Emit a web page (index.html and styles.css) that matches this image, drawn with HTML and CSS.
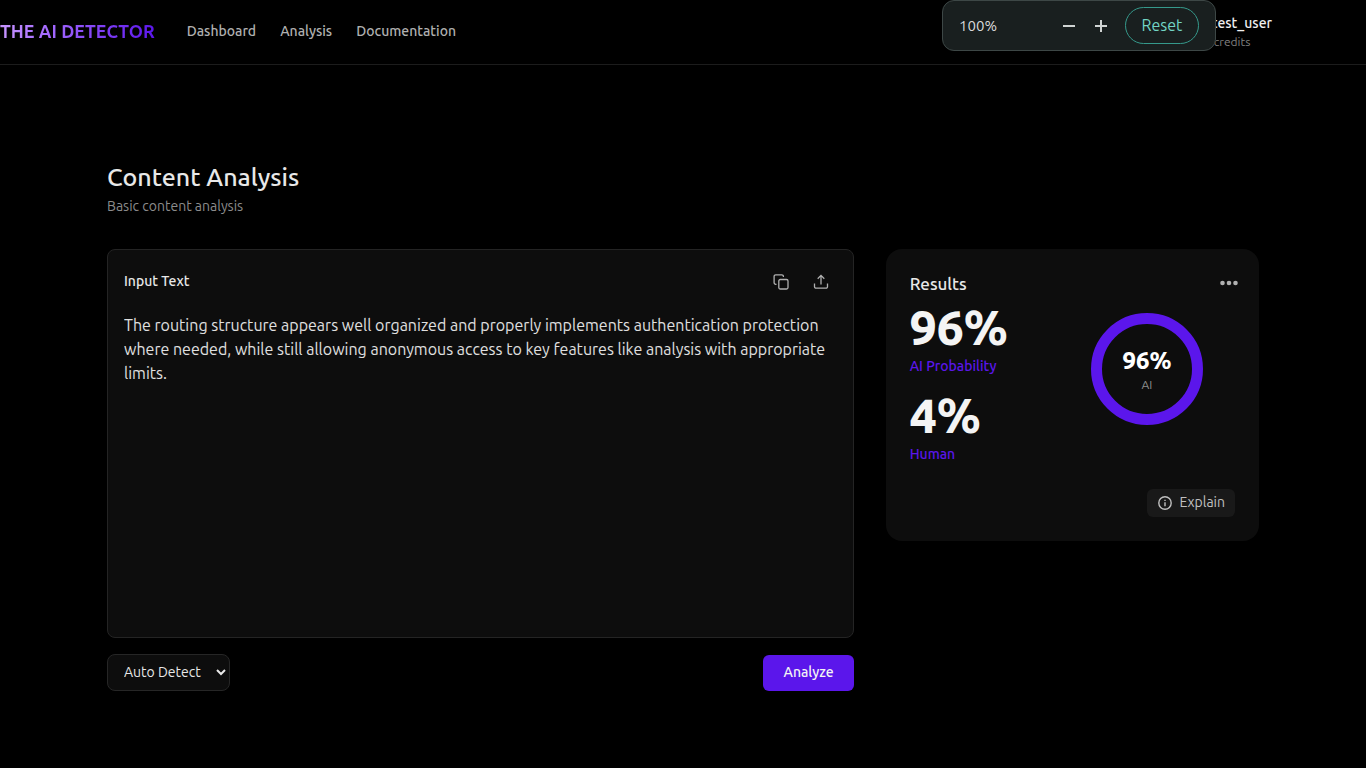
FILE: index.html
```html
<!DOCTYPE html>
<html lang="en">
<head>
<meta charset="utf-8">
<meta name="viewport" content="width=device-width, initial-scale=1">
<title>The AI Detector</title>
<link rel="stylesheet" href="styles.css">
</head>
<body>
<header class="site-header">
  <a class="brand" href="#">THE AI DETECTOR</a>
  <nav class="nav">
    <a href="#">Dashboard</a>
    <a href="#">Analysis</a>
    <a href="#">Documentation</a>
  </nav>
  <div class="user">
    <span class="user-name">test_user</span>
    <span class="user-credits">credits</span>
  </div>
</header>

<div class="zoom-bubble">
  <span class="zoom-value">100%</span>
  <button class="zoom-step" type="button" aria-label="Zoom out"><svg width="14" height="14" viewBox="0 0 14 14"><path d="M1 7h12"/></svg></button>
  <button class="zoom-step" type="button" aria-label="Zoom in"><svg width="14" height="14" viewBox="0 0 14 14"><path d="M1 7h12M7 1v12"/></svg></button>
  <button class="zoom-reset" type="button">Reset</button>
</div>

<main class="page">
  <h1 class="title">Content Analysis</h1>
  <p class="subtitle">Basic content analysis</p>

  <div class="columns">
    <section class="editor">
      <div class="input-card">
        <div class="input-head">
          <label class="input-label" for="content">Input Text</label>
          <div class="input-tools">
            <button class="icon-button" type="button" aria-label="Copy">
              <svg width="16" height="16" viewBox="0 0 16 16"><rect x="5.800" y="5.500" width="9.200" height="9.500" rx="1.500"/><path d="M3.500 10.300h-.8A1.600 1.600 0 0 1 1.100 8.700V2.400A1.600 1.600 0 0 1 2.700.8h6.100A1.600 1.600 0 0 1 10.400 2.400V3"/></svg>
            </button>
            <button class="icon-button" type="button" aria-label="Upload">
              <svg width="16" height="16" viewBox="0 0 16 16"><path d="M8 10.500V1.600M4.700 4.700 8 1.400l3.300 3.300M1.500 9.500v3.200a1.500 1.500 0 0 0 1.500 1.500h10a1.500 1.500 0 0 0 1.500-1.500V9.500"/></svg>
            </button>
          </div>
        </div>
        <textarea class="input-text" id="content" spellcheck="false">The routing structure appears well organized and properly implements authentication protection where needed, while still allowing anonymous access to key features like analysis with appropriate limits.</textarea>
      </div>
      <div class="actions">
        <select class="language" aria-label="Language"><option>Auto Detect</option></select>
        <button class="analyze" type="button">Analyze</button>
      </div>
    </section>

    <section class="results">
      <div class="results-head">
        <h2 class="results-title">Results</h2>
        <button class="more" type="button" aria-label="More options"><svg width="20" height="6" viewBox="0 0 20 6"><circle cx="3.500" cy="3" r="2.300"/><circle cx="10" cy="3" r="2.300"/><circle cx="16.500" cy="3" r="2.300"/></svg></button>
      </div>
      <div class="results-body">
        <div class="scores">
          <div class="score"><span class="score-value">96%</span><span class="score-label">AI Probability</span></div>
          <div class="score"><span class="score-value">4%</span><span class="score-label">Human</span></div>
        </div>
        <div class="gauge">
          <span class="gauge-value">96%</span>
          <span class="gauge-label">AI</span>
        </div>
      </div>
      <button class="explain" type="button">
        <svg width="14" height="14" viewBox="0 0 14 14"><circle cx="7" cy="7" r="6.200"/><path d="M7 6.300v3.900M7 3.800v1.200"/></svg>
        Explain
      </button>
    </section>
  </div>
</main>
</body>
</html>
```
FILE: styles.css
```css
* { box-sizing: border-box; }

body {
  margin: 0;
  background: #000;
  color: #e8e8e8;
  font-family: Ubuntu, "Noto Sans", sans-serif;
  font-size: 14px;
  line-height: 20px;
}

button, select, textarea { font: inherit; color: inherit; }
button { border: 0; background: none; padding: 0; cursor: pointer; }
a { color: inherit; text-decoration: none; }
svg { display: block; fill: none; stroke: currentColor; }

.site-header {
  display: flex;
  align-items: center;
  min-height: 65px;
  padding-right: 94px;
  border-bottom: 1px solid #1c1c1c;
}

.brand {
  padding-bottom: 2px;
  font-size: 18px;
  font-weight: 600;
  line-height: 24px;
  background: linear-gradient(90deg, #c896ff, #a56bff 30%, #5b16eb);
  -webkit-background-clip: text;
  background-clip: text;
  color: transparent;
}

.nav {
  display: flex;
  gap: 24px;
  margin-left: 32px;
  padding-bottom: 2px;
  color: #b0b0b0;
  font-weight: 500;
}

.user { display: flex; flex-direction: column; margin-left: auto; }
.user-name { color: #f0f0f0; font-weight: 500; }
.user-credits { padding-left: 2px; color: #808080; font-size: 12px; line-height: 18px; }

.zoom-bubble {
  position: absolute;
  top: 0;
  right: 150px;
  display: flex;
  align-items: center;
  width: 274px;
  height: 51px;
  padding: 0 16px;
  border: 1px solid #3d4746;
  border-radius: 12px;
  background: #191f1f;
}
.zoom-value { margin-right: auto; color: #d8dada; font-size: 15px; }
.zoom-step { padding: 9px; color: #d0d4d3; }
.zoom-step svg { stroke-width: 2; }
.zoom-reset {
  width: 74px;
  height: 37px;
  margin-left: 8px;
  padding-bottom: 2px;
  border: 1px solid #35998b;
  border-radius: 20px;
  color: #72d5c5;
  font-size: 16px;
}

.page { max-width: 1200px; margin: 0 auto; padding: 96px 24px 72px; }
.title { margin: 0; font-size: 25px; font-weight: 500; line-height: 32px; }
.subtitle { margin: 3px 0 33px; color: #8c8c8c; }

.columns { display: grid; grid-template-columns: 2fr 1fr; gap: 32px; align-items: start; }

.input-card {
  display: flex;
  flex-direction: column;
  min-height: 389px;
  padding: 16px;
  border: 1px solid #242424;
  border-radius: 8px;
  background: #0d0d0d;
}
.input-head { display: flex; justify-content: space-between; align-items: center; }
.input-label { padding-bottom: 2px; font-weight: 500; }
.input-tools { display: flex; gap: 8px; }
.icon-button { padding: 8px; color: #b0b0b0; }
.icon-button svg { stroke-width: 1.3; }
.input-text {
  flex: 1;
  width: 100%;
  margin-top: 15px;
  padding: 0;
  border: 0;
  outline: 0;
  resize: none;
  background: none;
  color: #e0e0e0;
  font-size: 16px;
  line-height: 24px;
}

.actions { display: flex; justify-content: space-between; align-items: center; margin-top: 16px; }
.language {
  width: 123px;
  height: 37px;
  padding: 0 0 2px 12px;
  border: 1px solid #262626;
  border-radius: 8px;
  background: #0d0d0d;
}
.analyze {
  padding: 7px 20px 9px;
  border-radius: 6px;
  background: #5b16eb;
  color: #f4f4f4;
  font-weight: 500;
}

.results { padding: 24px; border-radius: 16px; background: #0d0d0d; }
.results-head { display: flex; justify-content: space-between; align-items: center; height: 20px; }
.results-title { margin: 0; padding-top: 2px; font-size: 17px; font-weight: 500; line-height: 24px; }
.more { padding: 8px; margin-right: -12px; color: #b0b0b0; }
.more svg { fill: currentColor; stroke: none; }

.results-body { display: grid; grid-template-columns: 1fr 176px; margin-top: 10px; }
.scores { display: grid; align-content: start; gap: 15px; }
.score { display: grid; }
.score-value { color: #f4f4f4; font-size: 48px; font-weight: 800; line-height: 48px; }
.score-label { margin-top: 5px; color: #5b16eb; font-weight: 500; }

.gauge {
  display: flex;
  flex-direction: column;
  align-items: center;
  justify-content: center;
  justify-self: center;
  width: 112px;
  height: 112px;
  margin-top: 10px;
  padding-top: 4px;
  border: 11px solid #5b16eb;
  border-radius: 50%;
}
.gauge-value { color: #fff; font-size: 24px; font-weight: 800; line-height: 28px; }
.gauge-label { color: #8c8c8c; font-size: 12px; line-height: 20px; }

.explain {
  display: flex;
  align-items: center;
  gap: 7px;
  margin: 25px 0 0 auto;
  padding: 3px 10px 5px 11px;
  border-radius: 6px;
  background: #191919;
  color: #c0c0c0;
}
.explain svg { margin-top: 2px; stroke-width: 1.4; }
```
